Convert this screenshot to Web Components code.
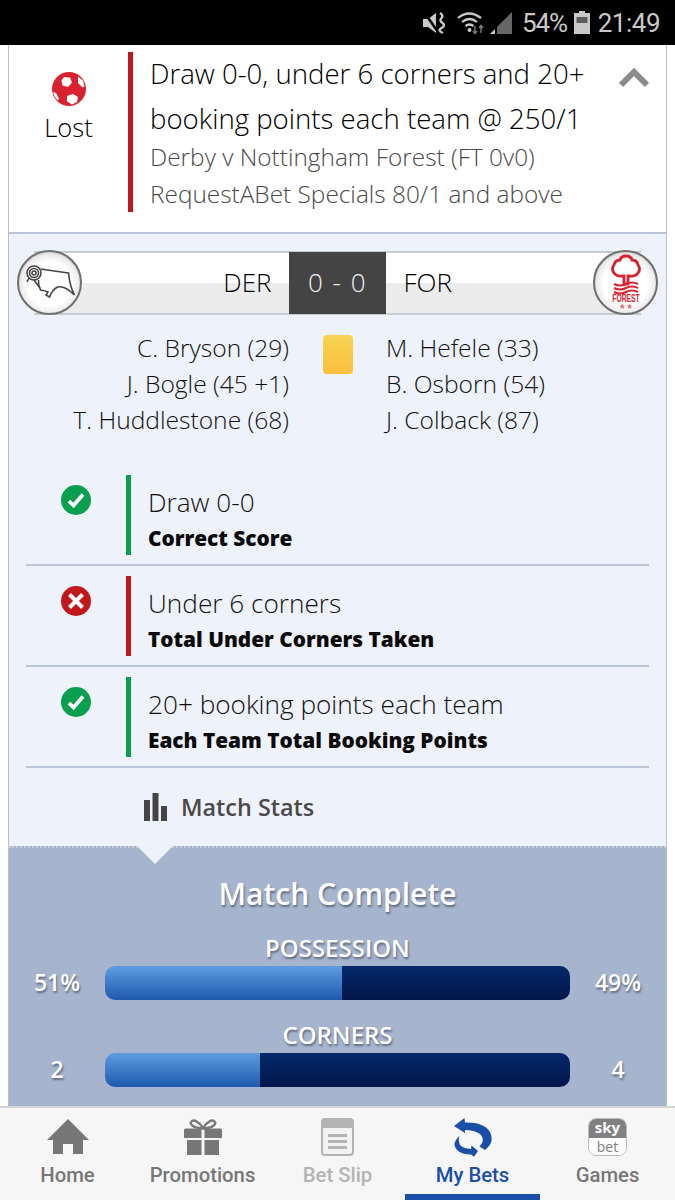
<!DOCTYPE html>
<html>
<head>
<meta charset="utf-8">
<title>My Bets</title>
<style>
	html, body { margin: 0; padding: 0; background: #fff; }
	body { width: 675px; height: 1200px; overflow: hidden; display: flex; flex-direction: column; font-family: "Open Sans", "Liberation Sans", sans-serif; color: #111; }
	.page { flex: 1; min-height: 0; margin: 0 8px 0 8px; border: solid #b3bfd2; border-width: 0 1px; overflow: hidden; display: flex; flex-direction: column; }
</style>
</head>
<body>
<status-bar></status-bar>
<div class="page">
	<bet-header>
		<span slot="title">Draw 0-0, under 6 corners and 20+ booking points each team @ 250/1</span>
		<span slot="match">Derby v Nottingham Forest (FT 0v0)</span>
		<span slot="market">RequestABet Specials 80/1 and above</span>
	</bet-header>
	<match-panel>
		<score-board home="DER" away="FOR" score="0 - 0"></score-board>
		<booking-list>
			<span slot="home">C. Bryson (29)</span><span slot="home">J. Bogle (45 +1)</span><span slot="home">T. Huddlestone (68)</span>
			<span slot="away">M. Hefele (33)</span><span slot="away">B. Osborn (54)</span><span slot="away">J. Colback (87)</span>
		</booking-list>
		<bet-leg state="won" name="Draw 0-0" market="Correct Score"></bet-leg>
		<bet-leg state="lost" name="Under 6 corners" market="Total Under Corners Taken"></bet-leg>
		<bet-leg state="won" name="20+ booking points each team" market="Each Team Total Booking Points"></bet-leg>
		<stats-link></stats-link>
	</match-panel>
	<stats-panel>
		<stat-bar label="POSSESSION" left="51%" right="49%" split="51"></stat-bar>
		<stat-bar label="CORNERS" left="2" right="4" split="33.3"></stat-bar>
	</stats-panel>
</div>
<tab-bar></tab-bar>

<script>
class StatusBar extends HTMLElement {
	constructor() {
		super();
		this.attachShadow({ mode: "open" });
		this.shadowRoot.innerHTML = `
		<style>
			:host { display: flex; flex: none; height: 45px; background: #000; color: #c9c9c9; align-items: center; justify-content: flex-end; padding-right: 15px; font: 400 26px Roboto, sans-serif; }
			svg { display: block; flex: none; }
			.pct { margin: 0 7px 0 9px; letter-spacing: -1.2px; }
			.time { margin-left: 8px; letter-spacing: -.5px; }
		</style>
		<svg width="24" height="24" viewBox="0 0 24 24" style="margin-right:10px">
			<path d="M0 8h5l8-6v20l-8-6H0z" fill="#c9c9c9"/>
			<path d="M1 1l14 20" stroke="#000" stroke-width="2.5"/>
			<path d="M17 2q4 2.5 1.500 5t1 5-1 5 1.500 5" fill="none" stroke="#c9c9c9" stroke-width="2.4"/>
		</svg>
		<svg width="27" height="24" viewBox="0 0 27 24" style="margin-right:6px">
			<g fill="none" stroke="#c9c9c9" stroke-width="2.2">
				<path d="M1 7q11-9 23 0"/><path d="M5 11q7.500-6 15 0"/><path d="M8.500 15q4-3 8 0"/>
			</g>
			<circle cx="12.500" cy="19" r="2" fill="#c9c9c9"/>
			<path d="M18 15v7M16 20l2 2.500 2-2.500" stroke="#777" stroke-width="1.500" fill="none"/>
			<path d="M24 22v-7M22 17l2-2.500 2 2.500" stroke="#777" stroke-width="1.500" fill="none"/>
		</svg>
		<svg width="23" height="24" viewBox="0 0 23 24">
			<path d="M22 1v22H7V16z" fill="#666"/><path d="M0 23l5-5v5z" fill="#c9c9c9"/>
		</svg>
		<span class="pct">54%</span>
		<svg width="16" height="23" viewBox="0 0 16 23">
			<path d="M5 0h6v2h5v21H0V2h5z" fill="#c9c9c9"/><rect x="2.500" y="6" width="11" height="6" fill="#5c5c5c"/>
		</svg>
		<span class="time">21:49</span>`;
	}
}

class BetHeader extends HTMLElement {
	constructor() {
		super();
		this.attachShadow({ mode: "open" });
		this.shadowRoot.innerHTML = `
		<style>
			:host { display: flex; flex: none; height: 189px; box-sizing: border-box; background: #fff; border-bottom: 2px solid #b9c5d7; padding: 7px 15px 0 0; }
			.result { width: 119px; flex: none; display: flex; flex-direction: column; align-items: center; padding-top: 20px; box-sizing: border-box; font-size: 25.500px; line-height: 28px; font-weight: 300; color: #000; }
			.result svg { display: block; margin-bottom: 7px; }
			.body { width: 467px; flex: none; height: 160px; margin-right: 24px; box-sizing: border-box; border-left: 5px solid #c0171d; padding-left: 17px; }
			.title { font-size: 27.600px; line-height: 45px; margin-top: -1px; font-weight: 300; color: #000; }
			.sub { font-size: 24.400px; line-height: 37px; color: #4a4a4a; white-space: nowrap; font-weight: 300; }
			.title + .sub { margin-top: -3px; }
			.chev { flex: none; margin-top: 16px; }
		</style>
		<div class="result">
			<svg width="34" height="34" viewBox="0 0 34 34">
				<circle cx="17" cy="17" r="17" fill="#d8222f"/>
				<path d="M12 5l6 .500 2 5-4 4.500-5.500-1.500-1-5z" fill="#fff"/>
				<path d="M26 4.500l5 4 1.500 6-2 1-4.500-4.500z" fill="#fff"/>
				<path d="M15 24l6-2 5 3-1 5-5 2.500-5-3z" fill="#fff"/>
				<path d="M1 20l3 1 3 5.500-1 2Q2 25 1 20z" fill="#fff"/>
			</svg>
			<span>Lost</span>
		</div>
		<div class="body">
			<div class="title"><slot name="title"></slot></div>
			<div class="sub"><slot name="match"></slot></div>
			<div class="sub"><slot name="market"></slot></div>
		</div>
		<svg class="chev" width="30" height="20" viewBox="0 0 30 20"><path d="M2 17L15 4l13 13" fill="none" stroke="#8c8c8c" stroke-width="6"/></svg>`;
	}
}

class MatchPanel extends HTMLElement {
	constructor() {
		super();
		this.attachShadow({ mode: "open" });
		this.shadowRoot.innerHTML = `
		<style>
			:host { display: block; flex: none; height: 612px; box-sizing: border-box; background: #eef2fa; padding: 17px 17px 0 17px; }
		</style>
		<slot></slot>`;
	}
}

class ScoreBoard extends HTMLElement {
	constructor() {
		super();
		this.attachShadow({ mode: "open" });
		this.shadowRoot.innerHTML = `
		<style>
			:host { display: block; position: relative; height: 64px; margin: 0 8px; }
			.bar { display: flex; height: 64px; box-sizing: border-box; border: solid #c6ccd4; border-width: 2px 0; background: linear-gradient(#fff 0 50%, #ececec 50% 100%); font-size: 26px; font-weight: 300; color: #000; }
			.side { flex: 1; display: flex; align-items: center; padding-bottom: 2px; }
			.home { justify-content: flex-end; padding-right: 17px; }
			.away { padding-left: 18px; }
			.score { width: 97px; margin: -1px 0; padding-bottom: 2px; box-sizing: border-box; flex: none; background: #444; color: #f0f0f0; display: flex; align-items: center; justify-content: center; word-spacing: 2px; letter-spacing: .5px; }
			.badge { position: absolute; top: -1px; width: 65px; height: 65px; box-sizing: border-box; border-radius: 50%; border: 2px solid #6f6f6f; background: radial-gradient(circle at 50% 52%, #fff 0 50%, #ececec 66%, #a8a8a8 82%, #e6e6e6 92%, #8a8a8a 100%); display: flex; align-items: center; justify-content: center; }
			.badge.l { left: -17px; }
			.badge.r { right: -17px; }
			.badge svg { display: block; }
			.forest { font: 700 10px "Liberation Sans", sans-serif; fill: #d8222f; }
		</style>
		<div class="bar">
			<div class="side home">${this.getAttribute("home")}</div>
			<div class="score">${this.getAttribute("score")}</div>
			<div class="side away">${this.getAttribute("away")}</div>
		</div>
		<div class="badge l">
			<svg width="52" height="52" viewBox="0 0 52 52">
				<g fill="none" stroke="#444" stroke-width="1.600">
					<circle cx="10" cy="16" r="7"/><circle cx="10" cy="16" r="4.500"/><circle cx="10" cy="16" r="2"/>
					<path d="M16.500 12Q30 14 44.500 16 46 30 50.500 38L44.500 33Q38 29 33.500 30 28 33 25.500 40L22 38 24 35Q18 33 16.500 33 14 28 14.500 23"/>
					<path d="M10 23l6 8M5 21l-2 4"/>
				</g>
			</svg>
		</div>
		<div class="badge r">
			<svg width="48" height="58" viewBox="0 0 48 58">
				<path d="M24 2q5 0 6 4 5 0 6 5 3 4 0 8-3 4-8 3l-2 0v8h-4v-8l-2 0q-5 1-8-3-3-4 0-8 1-5 6-5 1-4 6-4z" fill="none" stroke="#d8222f" stroke-width="2.800"/>
				<g fill="none" stroke="#d8222f" stroke-width="2.200">
					<path d="M12 30q6 3 12 0t12 0"/><path d="M12 34q6 3 12 0t12 0"/><path d="M12 38q6 3 12 0t12 0"/>
				</g>
				<text class="forest" transform="translate(24 48) scale(.68 1.100)" text-anchor="middle">FOREST</text>
				<text x="24" y="55" text-anchor="middle" font-size="8" fill="#e5737a" font-family="DejaVu Sans, sans-serif">★★</text>
			</svg>
		</div>`;
	}
}

class BookingList extends HTMLElement {
	constructor() {
		super();
		this.attachShadow({ mode: "open" });
		this.shadowRoot.innerHTML = `
		<style>
			:host { display: grid; grid-template-columns: 1fr 97px 1fr; height: 135px; padding: 15px 0 0; font-size: 24.600px; line-height: 36px; color: #111; margin: 0 8px; font-weight: 300; }
			.col { display: flex; flex-direction: column; white-space: nowrap; }
			.home { align-items: flex-end; }
			.mid { display: flex; justify-content: center; }
			.card { width: 30px; height: 39px; margin-top: 5px; border-radius: 4px; background: linear-gradient(#f7d354, #fbbf3c); }
		</style>
		<div class="col home"><slot name="home"></slot></div>
		<div class="mid"><div class="card"></div></div>
		<div class="col"><slot name="away"></slot></div>`;
	}
}

class BetLeg extends HTMLElement {
	constructor() {
		super();
		const won = this.getAttribute("state") == "won";
		const colour = won ? "#0a9e4f" : "#c2181c";
		const mark = won
			? `<path d="M8 16l4.500 4.500 9.500-11" fill="none" stroke="#fff" stroke-width="3.800"/>`
			: `<path d="M8.500 8.500l13 13M21.500 8.500l-13 13" fill="none" stroke="#fff" stroke-width="4"/>`;
		this.attachShadow({ mode: "open" });
		this.shadowRoot.innerHTML = `
		<style>
			:host { display: flex; height: 101px; box-sizing: border-box; border-bottom: 2px solid #bcc6da; padding-top: 10px; }
			.icon { width: 100px; flex: none; display: flex; justify-content: center; padding-top: 10px; }
			.icon svg { display: block; }
			.text { height: 80px; box-sizing: border-box; border-left: 5px solid ${colour}; padding-left: 17px; flex: 1; white-space: nowrap; }
			.name { font-size: 26.200px; line-height: 37px; margin-top: 9px; color: #111; font-weight: 300; }
			.market { font-size: 20.800px; line-height: 34px; font-weight: 800; color: #0a0a0a; }
		</style>
		<div class="icon"><svg width="30" height="30" viewBox="0 0 30 30"><circle cx="15" cy="15" r="15" fill="${colour}"/>${mark}</svg></div>
		<div class="text">
			<div class="name">${this.getAttribute("name")}</div>
			<div class="market">${this.getAttribute("market")}</div>
		</div>`;
	}
}

class StatsLink extends HTMLElement {
	constructor() {
		super();
		this.attachShadow({ mode: "open" });
		this.shadowRoot.innerHTML = `
		<style>
			:host { display: flex; align-items: center; height: 78px; padding-left: 118px; gap: 14px; font-size: 23.400px; font-weight: 600; color: #4a4a4a; }
			svg { display: block; }
		</style>
		<svg width="23" height="28" viewBox="0 0 23 28" fill="#444"><rect width="6" height="21" y="7"/><rect x="8.500" width="6" height="28"/><rect x="17" y="13" width="6" height="15"/></svg>
		<span>Match Stats</span>`;
	}
}

class StatsPanel extends HTMLElement {
	constructor() {
		super();
		this.attachShadow({ mode: "open" });
		this.shadowRoot.innerHTML = `
		<style>
			:host { display: block; position: relative; flex: 1; min-height: 0; background: #a6b4ce; border-top: 2px dotted #c5cedd; color: #fff; text-shadow: 1px 2px 2px rgba(40,50,70,.55); }
			.notch { position: absolute; left: 128px; top: -2px; width: 0; height: 0; border: solid transparent; border-width: 18px 18px 0; border-top-color: #eef2fa; }
			h2 { margin: 0; padding: 27px 0 0; font-size: 30px; line-height: 38px; font-weight: 600; text-align: center; }
		</style>
		<div class="notch"></div>
		<h2>Match Complete</h2>
		<slot></slot>`;
	}
}

class StatBar extends HTMLElement {
	constructor() {
		super();
		this.attachShadow({ mode: "open" });
		this.shadowRoot.innerHTML = `
		<style>
			:host { display: block; }
			.label { text-align: center; font-size: 24px; line-height: 30px; font-weight: 600; padding-top: 20px; }
			.row { display: grid; grid-template-columns: 96px 465px 96px; align-items: center; font-size: 23px; line-height: 30px; font-weight: 600; margin-top: 3px; text-align: center; }
			.row span { margin-top: -2px; }
			.track { display: flex; height: 34px; border-radius: 10px; overflow: hidden; }
			.a { background: linear-gradient(#5f9cdf, #1f59ae); }
			.b { flex: 1; background: linear-gradient(#04296b, #021649); }
		</style>
		<div class="label">${this.getAttribute("label")}</div>
		<div class="row">
			<span>${this.getAttribute("left")}</span>
			<div class="track"><div class="a" style="width:${this.getAttribute("split")}%"></div><div class="b"></div></div>
			<span>${this.getAttribute("right")}</span>
		</div>`;
	}
}

class TabBar extends HTMLElement {
	constructor() {
		super();
		this.attachShadow({ mode: "open" });
		this.shadowRoot.innerHTML = `
		<style>
			:host { display: grid; grid-template-columns: repeat(5, 135px); flex: none; height: 94px; box-sizing: border-box; background: #f6f6f6; border-top: 2px solid #d4d4d4; font: 500 20.300px Roboto, sans-serif; color: #777; }
			.tab { display: flex; flex-direction: column; align-items: center; position: relative; }
			.ic { height: 40px; margin-top: 9px; display: flex; align-items: center; justify-content: center; }
			.ic svg { display: block; }
			.lbl { margin-top: 4px; line-height: 28px; }
			.dim { color: #b4b4b4; }
			.on { color: #1a4fa8; }
			.on::after { content: ""; position: absolute; left: 0; right: 0; bottom: 0; height: 6px; background: #1a4fa8; }
			.sky { width: 39px; height: 38px; box-sizing: border-box; border: 1px solid #bbb; border-radius: 8px; overflow: hidden; display: flex; flex-direction: column; font-family: "Open Sans", sans-serif; line-height: 1; text-align: center; }
			.sky b { display: block; height: 19px; background: #808080; color: #fff; font-size: 15px; font-weight: 700; line-height: 17px; }
			.sky i { display: block; flex: 1; font-style: normal; font-size: 14px; font-weight: 400; line-height: 17px; color: #808080; background: #fbfbfb; }
		</style>
		<div class="tab">
			<div class="ic"><svg width="42" height="36" viewBox="0 0 42 36"><path d="M21 0L42 21H36V35H26V25H16V35H6V21H0z" fill="#777"/></svg></div>
			<span class="lbl">Home</span>
		</div>
		<div class="tab">
			<div class="ic"><svg width="38" height="36" viewBox="0 0 38 36" fill="#777">
				<path d="M0 11q0-1.500 1.500-1.500h35Q38 9.500 38 11v8H20.500v-9h-3v9H0z"/><path d="M3 21h14.500v15H3zM20.500 21H35v15H20.500z"/>
				<path d="M19 9C15 3 10 0 7.500 2.500 5 5 9 9 19 9.500 29 9 33 5 30.500 2.500 28 0 23 3 19 9z" fill="none" stroke="#777" stroke-width="2.400"/>
			</svg></div>
			<span class="lbl">Promotions</span>
		</div>
		<div class="tab dim">
			<div class="ic"><svg width="33" height="38" viewBox="0 0 33 38">
				<rect x="1" y="1" width="31" height="36" rx="3" fill="#f2f2f2" stroke="#b4b4b4" stroke-width="2"/>
				<path d="M1 4q0-3 3-3h25q3 0 3 3v6H1z" fill="#b4b4b4"/>
				<path d="M7 16h19v3H7zM7 22h19v3H7zM7 28h19v3H7z" fill="#b4b4b4"/>
			</svg></div>
			<span class="lbl">Bet Slip</span>
		</div>
		<div class="tab on">
			<div class="ic"><svg width="38" height="39" viewBox="0 0 38 39" fill="#1a4fa8">
				<path d="M0 8L10.500 0 11 4.500Q30 4 36 14 41 24 31 32L25.500 28.500Q32 22 26 16 20 12 11 12L11 15z"/>
				<path d="M5.300 18Q-3 26 3 32 8 36.500 17 36.500L20 38.700 24 33 17.500 27.500 17 31Q9 30.500 6 27 4 23 5.300 18z"/>
			</svg></div>
			<span class="lbl">My Bets</span>
		</div>
		<div class="tab">
			<div class="ic"><div class="sky"><b>sky</b><i>bet</i></div></div>
			<span class="lbl">Games</span>
		</div>`;
	}
}

customElements.define("status-bar", StatusBar);
customElements.define("bet-header", BetHeader);
customElements.define("match-panel", MatchPanel);
customElements.define("score-board", ScoreBoard);
customElements.define("booking-list", BookingList);
customElements.define("bet-leg", BetLeg);
customElements.define("stats-link", StatsLink);
customElements.define("stats-panel", StatsPanel);
customElements.define("stat-bar", StatBar);
customElements.define("tab-bar", TabBar);
</script>
</body>
</html>
